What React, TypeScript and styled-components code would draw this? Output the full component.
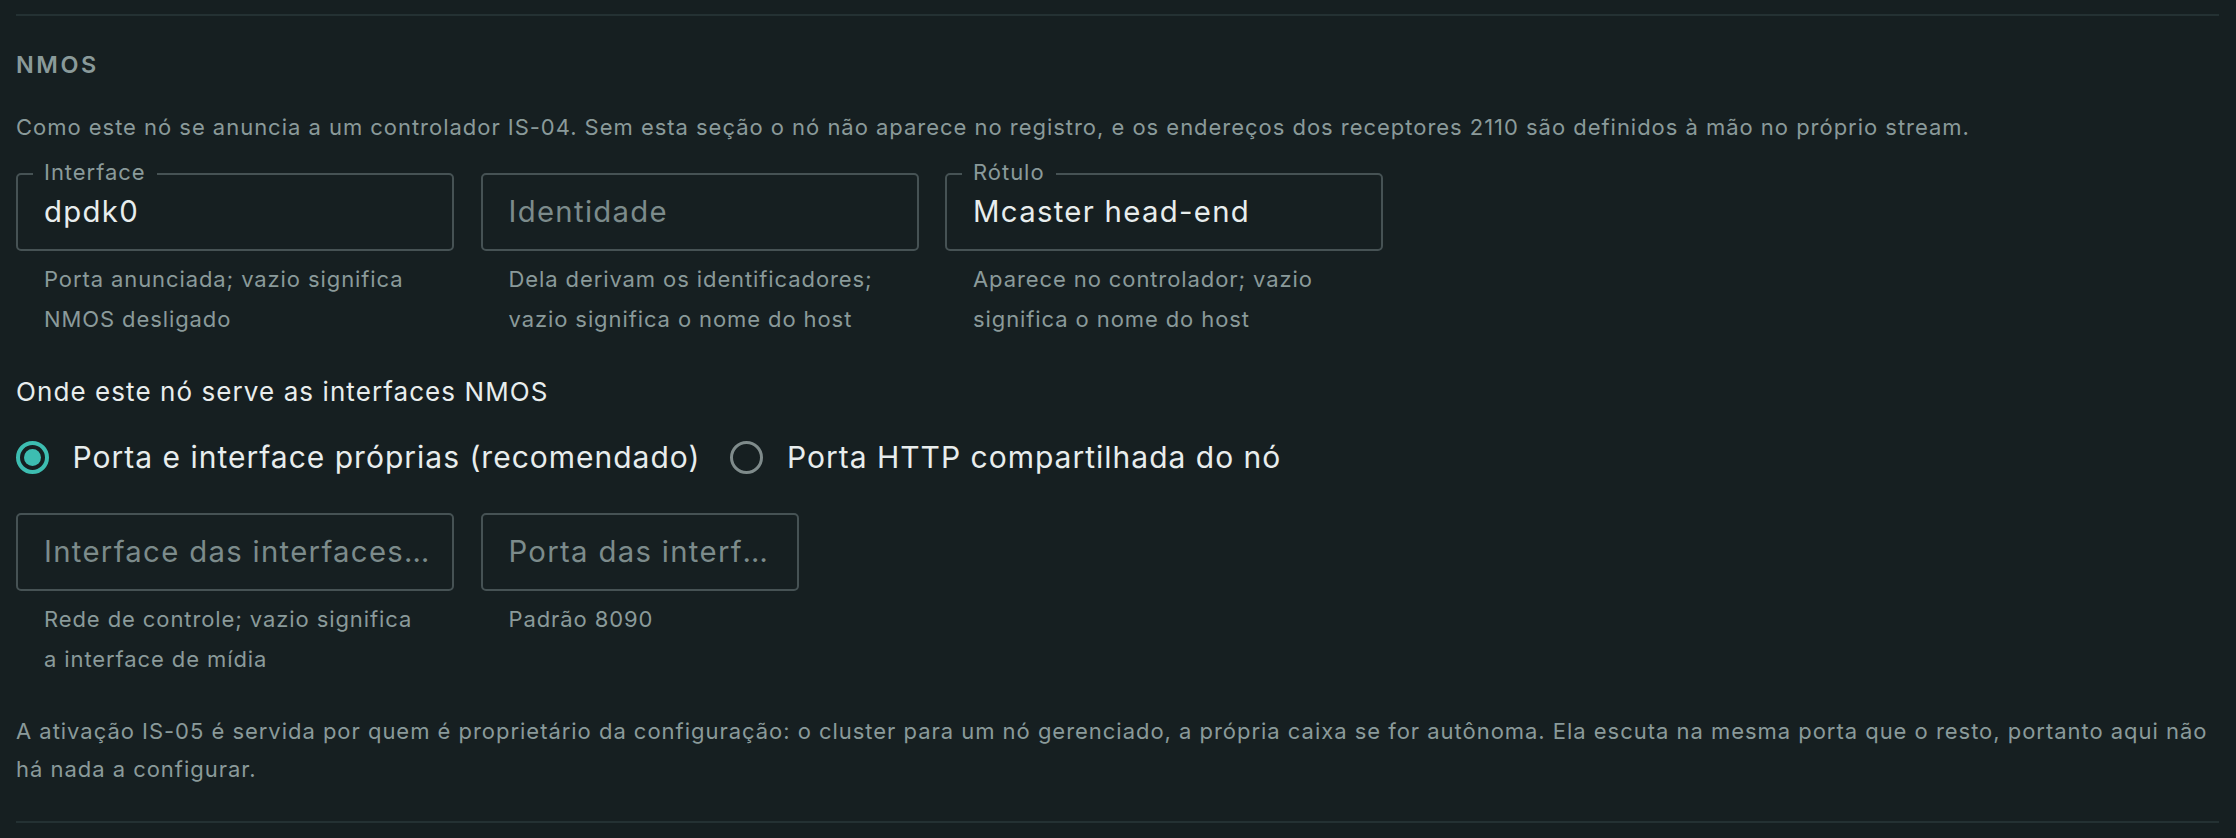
import { useState, FC } from "react";
import styled, { createGlobalStyle } from "styled-components";

const GlobalStyle = createGlobalStyle`
  html, body {
    margin: 0;
    padding: 0;
    background: #161f21;
  }
  body {
    font-family: Inter, "Noto Sans", "Liberation Sans", sans-serif;
    letter-spacing: 0.97px;
    color: #e6ecec;
  }
`;

const colors = {
  bg: "#161f21",
  rule: "#243133",
  border: "#465254",
  muted: "#8a9a9a",
  text: "#e8eded",
  teal: "#3dbdb1",
  radioOff: "#7f8b8b",
};

const Page = styled.div`
  padding: 14px 17px 0 16px;
`;

const Section = styled.section`
  border-top: 2px solid ${colors.rule};
  border-bottom: 2px solid ${colors.rule};
  padding: 35px 0 32.5px;
`;

const Heading = styled.h3`
  margin: 0;
  font-size: 23.4px;
  line-height: 28px;
  font-weight: 600;
  letter-spacing: 2.6px;
  text-transform: uppercase;
  color: ${colors.muted};
`;

const Description = styled.p<{ $gap?: number; $lh?: number }>`
  margin: ${(p) => p.$gap ?? 29}px 0 0;
  font-size: 22px;
  line-height: ${(p) => p.$lh ?? 38.9}px;
  color: ${colors.muted};
`;

const FieldRow = styled.div<{ $top: number }>`
  display: flex;
  gap: 26.5px;
  margin-top: ${(p) => p.$top}px;
  align-items: flex-start;
`;

const FieldCol = styled.div<{ $width: number }>`
  width: ${(p) => p.$width}px;
  display: flex;
  flex-direction: column;
`;

const InputWrap = styled.div`
  position: relative;
`;

const Input = styled.input`
  box-sizing: border-box;
  display: block;
  width: 100%;
  height: 78px;
  padding: 0 22px 0 26px;
  border: 2px solid ${colors.border};
  border-radius: 5px;
  background: transparent;
  color: ${colors.text};
  font-family: inherit;
  font-size: 29.3px;
  letter-spacing: 1.32px;
  text-overflow: ellipsis;
  outline: none;

  &::placeholder {
    color: #7c8b8b;
    opacity: 1;
    text-overflow: ellipsis;
  }
`;

const FloatLabel = styled.label`
  position: absolute;
  top: -12px;
  left: 17px;
  padding: 0 11px;
  background: ${colors.bg};
  font-size: 22px;
  line-height: 22px;
  color: ${colors.muted};
`;

const Helper = styled.div`
  margin-top: 8.5px;
  padding: 0 28px;
  font-size: 22px;
  line-height: 40px;
  letter-spacing: 0.9px;
  color: ${colors.muted};
`;

const Question = styled.div`
  margin-top: 33.5px;
  font-size: 26px;
  line-height: 38.4px;
  letter-spacing: 1.08px;
  color: ${colors.text};
`;

const RadioGroup = styled.div`
  display: flex;
  align-items: center;
  gap: 30px;
  margin-top: 22.3px;
  height: 48px;
`;

const RadioOption = styled.label`
  display: flex;
  align-items: center;
  gap: 23.5px;
  cursor: pointer;
  font-size: 30px;
  letter-spacing: 1px;
  color: ${colors.text};
`;

const RadioDot = styled.span<{ $checked: boolean }>`
  box-sizing: border-box;
  flex-shrink: 0;
  width: 33px;
  height: 33px;
  border-radius: 50%;
  border: ${(p) =>
    p.$checked ? `4px solid ${colors.teal}` : `3.5px solid ${colors.radioOff}`};
  display: flex;
  align-items: center;
  justify-content: center;

  &::after {
    content: "";
    width: 17px;
    height: 17px;
    border-radius: 50%;
    background: ${colors.teal};
    display: ${(p) => (p.$checked ? "block" : "none")};
  }
`;

type FieldProps = {
  width: number;
  label?: string;
  value?: string;
  placeholder?: string;
  helper: string;
};

const Field: FC<FieldProps> = ({ width, label, value, placeholder, helper }) => (
  <FieldCol $width={width}>
    <InputWrap>
      {label && <FloatLabel>{label}</FloatLabel>}
      <Input defaultValue={value} placeholder={placeholder} />
    </InputWrap>
    <Helper>{helper}</Helper>
  </FieldCol>
);

const options = [
  "Porta e interface próprias (recomendado)",
  "Porta HTTP compartilhada do nó",
];

const App = () => {
  const [mode, setMode] = useState(0);

  return (
    <>
      <GlobalStyle />
      <Page>
        <Section>
          <Heading>NMOS</Heading>
          <Description>
            Como este nó se anuncia a um controlador IS-04. Sem esta seção o nó não
            aparece no registro, e os endereços dos receptores 2110 são definidos à
            mão no próprio stream.
          </Description>

          <FieldRow $top={25.7}>
            <Field
              width={438}
              label="Interface"
              value="dpdk0"
              helper="Porta anunciada; vazio significa NMOS desligado"
            />
            <Field
              width={438}
              placeholder="Identidade"
              helper="Dela derivam os identificadores; vazio significa o nome do host"
            />
            <Field
              width={438}
              label="Rótulo"
              value="Mcaster head-end"
              helper="Aparece no controlador; vazio significa o nome do host"
            />
          </FieldRow>

          <Question>Onde este nó serve as interfaces NMOS</Question>
          <RadioGroup>
            {options.map((o, i) => (
              <RadioOption key={o} onClick={() => setMode(i)}>
                <RadioDot $checked={mode === i} />
                {o}
              </RadioOption>
            ))}
          </RadioGroup>

          <FieldRow $top={31.3}>
            <Field
              width={438}
              placeholder="Interface das interfaces NMOS"
              helper="Rede de controle; vazio significa a interface de mídia"
            />
            <Field width={318} placeholder="Porta das interfaces NMOS" helper="Padrão 8090" />
          </FieldRow>

          <Description $gap={32.5} $lh={38.3}>
            A ativação IS-05 é servida por quem é proprietário da configuração: o
            cluster para um nó gerenciado, a própria caixa se for autônoma. Ela escuta
            na mesma porta que o resto, portanto aqui não há nada a configurar.
          </Description>
        </Section>
      </Page>
    </>
  );
};

export default App;
